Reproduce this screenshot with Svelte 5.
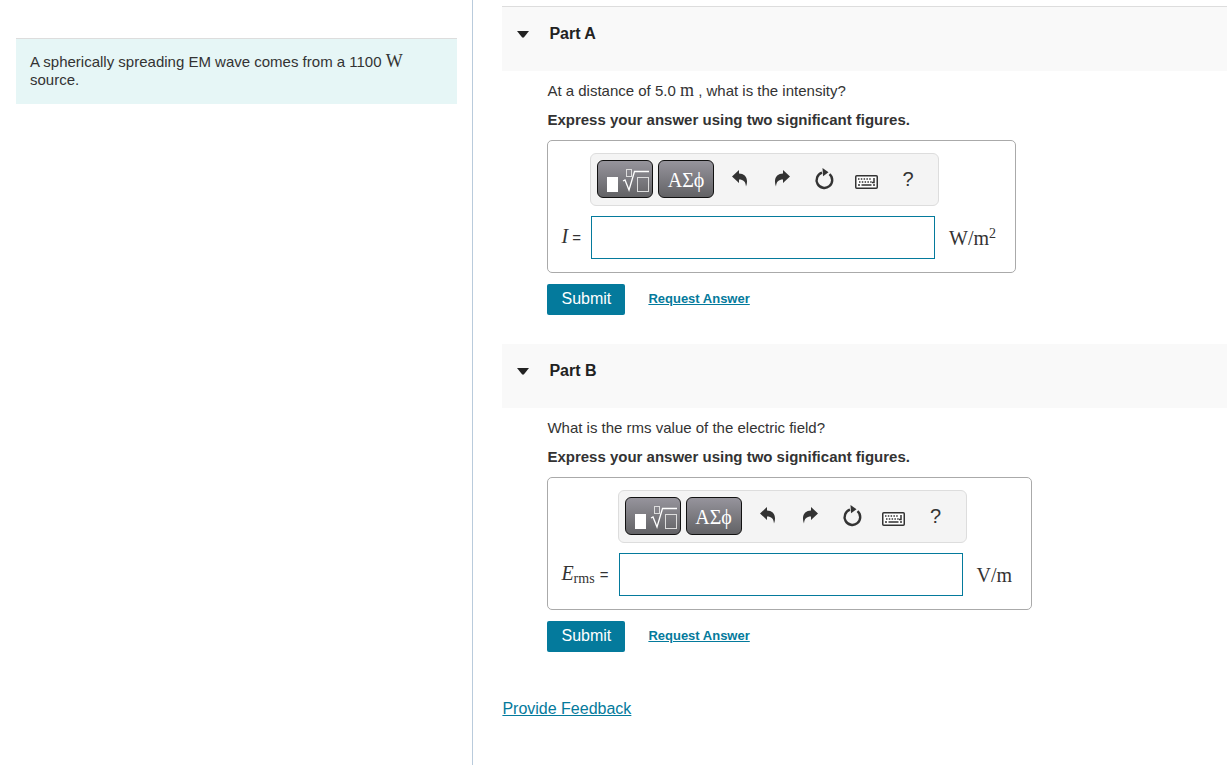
<script lang="ts">
  interface Part {
    id: string;
    title: string;
    before: string;
    quantity?: string;
    after?: string;
    symbol: string;
    sub?: string;
    unit: string;
    power?: string;
  }

  const parts: Part[] = [
    {
      id: 'a',
      title: 'Part A',
      before: 'At a distance of 5.0',
      quantity: 'm',
      after: ', what is the intensity?',
      symbol: 'I',
      unit: 'W/m',
      power: '2',
    },
    {
      id: 'b',
      title: 'Part B',
      before: 'What is the rms value of the electric field?',
      symbol: 'E',
      sub: 'rms',
      unit: 'V/m',
    },
  ];

  let answers: Record<string, string> = $state({ a: '', b: '' });
</script>

<div class="page">
  <aside class="intro">
    <p class="problem">A spherically spreading EM wave comes from a 1100 <span class="math">W</span> source.</p>
  </aside>

  <main class="parts">
    {#each parts as part (part.id)}
      <section class="part">
        <header class="part-header">
          <button class="toggle" aria-label="Collapse {part.title}">
            <svg width="12" height="7" viewBox="0 0 12 7"><path d="M0 0h12L7 6.2q-1 .9-2 0z" fill="#222" /></svg>
          </button>
          <h2>{part.title}</h2>
        </header>

        <div class="part-body">
          <p class="question">
            {part.before}
            {#if part.quantity}<span class="math">{part.quantity}</span> {part.after}{/if}
          </p>
          <p class="hint">Express your answer using two significant figures.</p>

          <div class="answer">
            <div class="toolbar">
              <button class="dark" aria-label="Templates">
                <svg width="48" height="26" viewBox="0 0 48 26" fill="none" stroke="#fff">
                  <rect x="6" y="11" width="11" height="15" fill="#fff" stroke="none" />
                  <rect x="25.5" y="3.5" width="5" height="7" stroke="#ddd" />
                  <path d="M22 15l2-1 4 10L33.500 5.500H48" stroke-width="1.300" />
                  <rect x="36.500" y="11.500" width="11" height="14" stroke="#ddd" />
                </svg>
              </button>
              <button class="dark greek" aria-label="Symbols">ΑΣϕ</button>
              <button class="tool" aria-label="Undo">
                <svg width="16" height="17" viewBox="0 0 16 17"><path d="M0 6.500L7 0v3.500c6 0 10 5 7 13C13.500 11.500 11.500 9.500 7 9.500V13z" fill="#333" /></svg>
              </button>
              <button class="tool" aria-label="Redo">
                <svg width="16" height="17" viewBox="0 0 16 17"><path d="M16 6.500L9 0v3.500C3 3.500-1 8.500 2 16.500 2.500 11.500 4.500 9.500 9 9.500V13z" fill="#333" /></svg>
              </button>
              <button class="tool" aria-label="Reset">
                <svg width="20" height="22" viewBox="0 0 20 22">
                  <path d="M15.500 6.200A7.800 7.800 0 1 1 8 4.700" fill="none" stroke="#333" stroke-width="2.400" />
                  <path d="M8.500 0l6 4.300-5.500 4z" fill="#333" />
                </svg>
              </button>
              <button class="tool" aria-label="Keyboard shortcuts">
                <svg class="keys" width="23" height="14" viewBox="0 0 23 14">
                  <rect x=".75" y=".75" width="21.500" height="12.500" rx="1" fill="#fff" stroke="#333" stroke-width="1.500" />
                  <path d="M3 4h13M4 7h13" stroke="#333" stroke-width="1.600" stroke-dasharray="1.500 1.300" />
                  <path d="M3 10h2M6.500 10h10M18 10h2M19 3v4.500h-2" fill="none" stroke="#333" stroke-width="1.500" />
                </svg>
              </button>
              <button class="tool help" aria-label="Help">?</button>
            </div>

            <label for="answer-{part.id}"><span class="math"><i>{part.symbol}</i>{#if part.sub}<sub>{part.sub}</sub>{/if}</span> =</label>
            <input id="answer-{part.id}" type="text" autocomplete="off" bind:value={answers[part.id]} />
            <span class="math unit">{part.unit}{#if part.power}<sup>{part.power}</sup>{/if}</span>
          </div>

          <div class="actions">
            <button class="submit">Submit</button>
            <a class="request" href="#request-{part.id}">Request Answer</a>
          </div>
        </div>
      </section>
    {/each}

    <a class="feedback" href="#feedback">Provide Feedback</a>
  </main>
</div>

<style>
  :global(body) {
    background: #fff;
  }

  .page {
    display: flex;
    min-height: 100vh;
    font-family: "Liberation Sans", Arial, sans-serif;
    font-size: 15px;
    line-height: 18px;
    color: #333;
  }

  p,
  h2 {
    margin: 0;
  }

  button {
    padding: 0;
    border: none;
    background: none;
    font-family: inherit;
    color: inherit;
    cursor: pointer;
  }

  svg {
    display: block;
    flex: none;
  }

  .math {
    font-family: "Liberation Serif", "Times New Roman", serif;
    font-size: 18px;
    line-height: 16px;
  }

  .intro {
    box-sizing: border-box;
    flex: 0 0 38.5%;
    padding: 38px 15px 0 16px;
  }

  .problem {
    padding: 14px 40px 15px 14px;
    border-top: 1px solid #ddd;
    background: #e6f6f6;
  }

  .parts {
    flex: 1;
    min-width: 0;
    padding: 6px 0 40px 29px;
    border-left: 1px solid #b9cbdc;
  }

  .part {
    margin-bottom: 29px;
  }

  .part-header {
    display: flex;
    align-items: center;
    height: 54px;
    padding: 0 15px 10px;
    background: #f9f9f9;
  }

  .part:first-child .part-header {
    border-top: 1px solid #ddd;
  }

  .toggle {
    width: 12px;
    margin-right: 20px;
  }

  h2 {
    font-size: 16px;
    color: #222;
  }

  .part-body {
    padding: 11px 20px 0 45px;
  }

  .question {
    margin-bottom: 11px;
  }

  .hint {
    margin-bottom: 11px;
    font-weight: bold;
  }

  .answer {
    box-sizing: border-box;
    display: inline-grid;
    grid-template-columns: auto 344px auto;
    align-items: center;
    row-gap: 10px;
    padding: 12px 19px 13px 13px;
    border: 1px solid #aaa;
    border-radius: 5px;
    vertical-align: top;
  }

  .answer .math {
    font-size: 20px;
  }

  .toolbar {
    box-sizing: border-box;
    grid-column: 2 / 4;
    display: flex;
    align-items: center;
    width: 349px;
    height: 53px;
    margin-left: -1px;
    padding: 0 6px 2px;
    border: 1px solid #ddd;
    border-radius: 6px;
    background: #f4f4f4;
  }

  .dark {
    display: flex;
    box-sizing: border-box;
    flex: none;
    align-items: center;
    justify-content: center;
    width: 56px;
    height: 38px;
    margin-right: 5px;
    border: 1px solid #111;
    border-radius: 6px;
    background: linear-gradient(#96949c, #626265);
    color: #fff;
  }

  .greek {
    padding-top: 3px;
    font-family: "Liberation Serif", "Times New Roman", serif;
    font-size: 20px;
  }

  .tool {
    display: flex;
    align-items: center;
    justify-content: center;
    width: 42px;
    height: 38px;
  }

  .keys {
    margin-top: 6px;
  }

  .help {
    padding-top: 2px;
    font-size: 20px;
  }

  label {
    padding-right: 10px;
    white-space: nowrap;
  }

  sub,
  sup {
    font-size: 14px;
    line-height: 0;
  }

  sub {
    margin-right: 1px;
    vertical-align: -3px;
  }

  sup {
    vertical-align: 7px;
  }

  input {
    box-sizing: border-box;
    width: 100%;
    height: 43px;
    padding: 0 8px;
    border: 1px solid #047a9c;
    border-radius: 0;
    background: #fff;
    font-size: 18px;
  }

  .unit {
    padding-left: 14px;
  }

  .actions {
    display: flex;
    align-items: center;
    gap: 23px;
    margin-top: 11px;
  }

  .submit {
    width: 78px;
    height: 31px;
    padding-bottom: 2px;
    border-radius: 2px;
    background: #047a9c;
    font-size: 16px;
    color: #fff;
  }

  a {
    color: #047a9c;
  }

  .request {
    padding-bottom: 2px;
    font-size: 13px;
    font-weight: bold;
  }

  .feedback {
    display: inline-block;
    margin-top: 19px;
    font-size: 16px;
  }
</style>
